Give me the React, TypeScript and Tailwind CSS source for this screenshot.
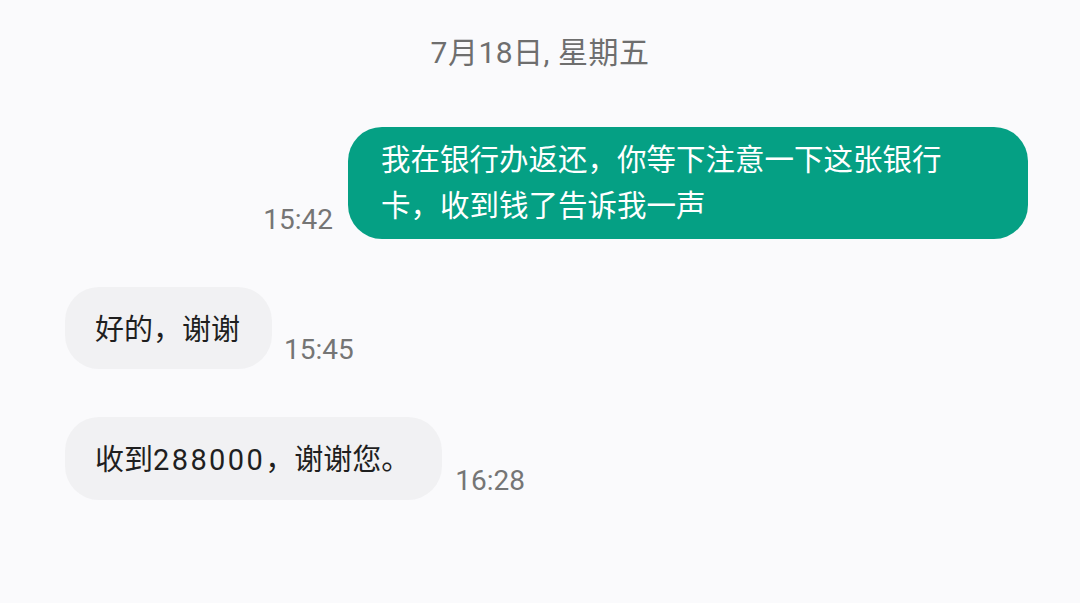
import React from "react";

const font = { fontFamily: '"Roboto", "Noto Sans CJK SC", sans-serif' };

function Time({ children }: { children: React.ReactNode }) {
  return (
    <span className="mb-[2px] text-[28px] leading-[34px] text-[#757575] shrink-0">{children}</span>
  );
}

export default function App() {
  return (
    <div className="w-[1080px] h-[603px] overflow-hidden bg-[#fafafc] pt-[33px]" style={font}>
      <div className="text-center text-[30px] leading-[40px] tracking-[0.5px] text-[#6e6e6e]">
        7月18日, 星期五
      </div>

      <div className="mt-[54px] flex items-end justify-end gap-[15px] pr-[52px]">
        <Time>15:42</Time>
        <div className="w-[680px] rounded-[34px] bg-[#05a084] pl-[33px] pr-[20px] py-[10px]">
          <p className="max-w-[575px] text-[29.5px] leading-[46px] text-white">
            我在银行办返还，你等下注意一下这张银行卡，收到钱了告诉我一声
          </p>
        </div>
      </div>

      <div className="mt-[48px] flex items-end gap-[12px] pl-[65px]">
        <div className="rounded-[34px] bg-[#f1f1f3] pl-[30px] pr-[32px] pt-[20px] pb-[16px]">
          <p className="text-[29px] leading-[46px] text-[#1f1f1f]">好的，谢谢</p>
        </div>
        <Time>15:45</Time>
      </div>

      <div className="mt-[48px] flex items-end gap-[13px] pl-[65px]">
        <div className="rounded-[34px] bg-[#f1f1f3] pl-[30px] pr-[32px] pt-[20px] pb-[17px]">
          <p className="text-[29px] leading-[46px] text-[#1f1f1f]">
            收到<span className="tracking-[2.4px]">288000</span>，谢谢您。
          </p>
        </div>
        <Time>16:28</Time>
      </div>
    </div>
  );
}
